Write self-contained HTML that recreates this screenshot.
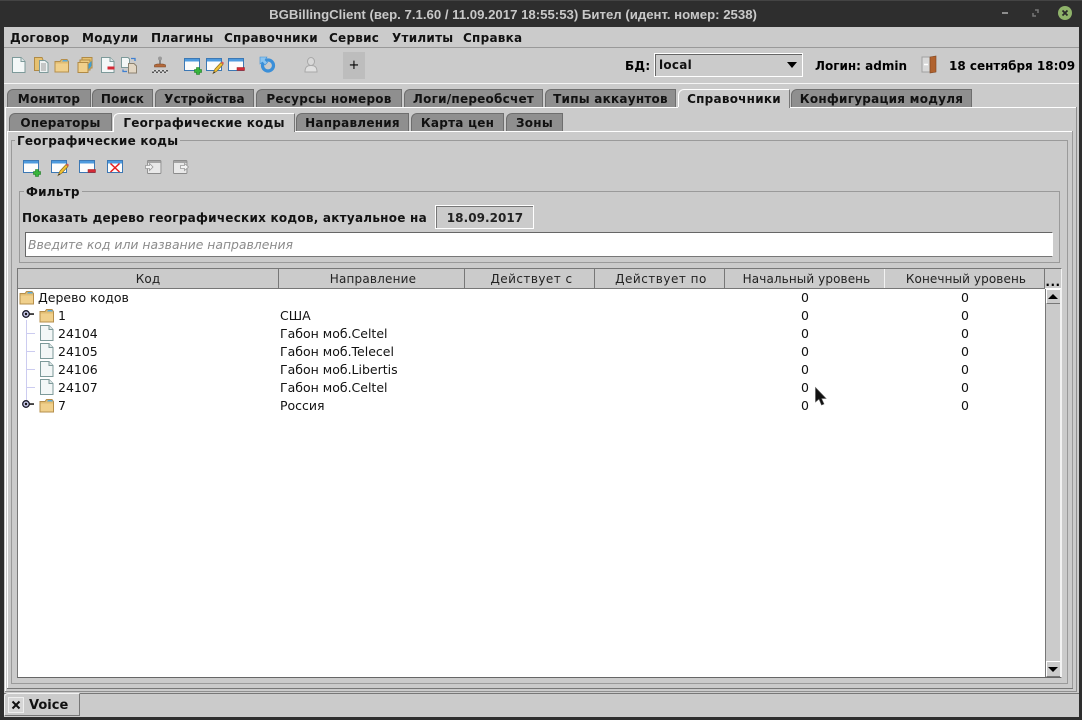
<!DOCTYPE html>
<html><head><meta charset="utf-8">
<style>
html,body{margin:0;padding:0;width:1082px;height:720px;overflow:hidden;background:#2e2e2e}
*{box-sizing:border-box}
body{font-family:"DejaVu Sans","Liberation Sans",sans-serif;color:#000;position:relative}
.a,.t,.b{position:absolute}
.t{white-space:nowrap;line-height:16px;height:16px;font-size:13px}
.b{font-weight:bold;font-size:12px;letter-spacing:.25px}
.m{top:30px;font-size:12px;letter-spacing:.25px;font-weight:bold;line-height:16px;position:absolute;white-space:nowrap;color:#111}
.tab{position:absolute;height:18px;background:#8f8f8f;border-top:1px solid #6e6e6e;border-left:1px solid #6e6e6e;border-right:1px solid #6e6e6e;border-top-left-radius:6px 6px;font-size:12px;letter-spacing:.25px;font-weight:bold;line-height:18px;text-align:center;white-space:nowrap;color:#111}
.sel{background:#cbcbcb;border-top:1px solid #fff;border-left:1px solid #fff;border-right:1px solid #777;height:19px;z-index:3}
.h{position:absolute;top:269px;height:19px;background:#cbcbcb;border-right:1px solid #777;font-size:12px;letter-spacing:.1px;line-height:20px;text-align:center;color:#222;white-space:nowrap}
.r{position:absolute;font-size:12.5px;line-height:18px;height:18px;white-space:nowrap;color:#111}
.c{position:absolute;font-size:12.5px;line-height:18px;height:18px;width:20px;text-align:center;color:#111}
svg{position:absolute;overflow:visible}
</style></head><body>
<svg width="0" height="0" style="position:absolute"><defs>
<g id="doc"><path d="M1.5.5H10L14 4.5V15.500H1.500Z" fill="#f3f7f7" stroke="#7d9a9a"/><path d="M10 .5V4.500H14" fill="#dfe8e8" stroke="#7d9a9a"/></g>
<g id="folder"><path d="M1 3.500H6L7.500 1.500H13L14.500 3.500V14H1Z" fill="#e2bd72" stroke="#b58f4c"/><path d="M9 2H13L14 3.500H8Z" fill="#5aa9d8"/><path d="M1.500 5.500H14V13.500H1.500Z" fill="#f0d08c"/></g>
<g id="win"><rect x=".5" y=".5" width="15" height="12" fill="#fcfcfc" stroke="#3c78b4"/><rect x="1" y="1" width="14" height="2.500" fill="#4d9ade"/></g>
<g id="plus"><path d="M10.500 11.500H12.500V9.500H15.500V11.500H17.500V14.500H15.500V16.500H12.500V14.500H10.500Z" fill="#37b43c" stroke="#1c7a22" stroke-width=".6"/></g>
<g id="minus"><rect x="9" y="9.500" width="7.500" height="3" fill="#d42a36" stroke="#962020" stroke-width=".5"/></g>
<g id="pen"><path d="M7 15.500L9 11L15 4.500L17 6.500L11 13Z" fill="#f1c232" stroke="#8a6a20" stroke-width=".7"/><path d="M15 4.500L17 6.500L18 5L16.500 3.500Z" fill="#d65a5a"/><path d="M7 15.500L8 13.500L9.500 14.500Z" fill="#333"/></g>
<g id="gwin"><rect x=".5" y=".5" width="15" height="13" rx="1" fill="#e9e9e9" stroke="#8b8b8b"/><rect x="1" y="1" width="14" height="2" fill="#a5a5a5"/></g>
<g id="key"><circle cx="4" cy="4" r="3.300" fill="#c6c6e6" stroke="#1a1a2a" stroke-width="1.300"/><circle cx="4" cy="4" r="1.200" fill="#111"/><path d="M7.500 3.300H12V4.800H7.500Z" fill="#111"/></g>
</defs></svg>

<!-- window frame -->
<div class="a" style="left:4px;top:27px;width:1075px;height:690px;background:#cbcbcb"></div>
<div class="a" style="left:0;top:0;width:1082px;height:1px;background:#444"></div>
<div class="t" style="left:0;width:1026px;text-align:center;color:#c9c9c9;font-family:'Liberation Sans',sans-serif;font-weight:bold;font-size:13.2px;line-height:16px;top:7px">BGBillingClient (вер. 7.1.60 / 11.09.2017 18:55:53) Бител (идент. номер: 2538)</div>
<div class="a" style="left:1002px;top:12px;width:6px;height:2px;background:#8d8d8d"></div>
<svg style="left:1032px;top:10px" width="8" height="8"><path d="M3 0H6V3M4 6H1V3" fill="none" stroke="#777" stroke-width="1.500"/></svg>
<svg style="left:1057px;top:6px" width="16" height="15"><circle cx="8" cy="7" r="7" fill="#8fb36a"/><path d="M5.500 4.500L10.500 9.500M10.500 4.500L5.500 9.500" stroke="#2a2a2a" stroke-width="1.800"/></svg>

<!-- menu -->
<div class="m" style="left:10px">Договор</div>
<div class="m" style="left:82px">Модули</div>
<div class="m" style="left:151px">Плагины</div>
<div class="m" style="left:224px">Справочники</div>
<div class="m" style="left:329px">Сервис</div>
<div class="m" style="left:392px">Утилиты</div>
<div class="m" style="left:463px">Справка</div>
<div class="a" style="left:4px;top:47px;width:1075px;height:1px;background:#999"></div>

<!-- toolbar icons -->
<svg style="left:11px;top:57px" width="16" height="16"><use href="#doc"/></svg>
<svg style="left:33px;top:57px" width="16" height="16"><path d="M1.500 .5H9L10 3V13.500H1.500Z" fill="#e6c170" stroke="#b08a45"/><path d="M6.500 3.500H12L15 6V15.500H6.500Z" fill="#eef2f2" stroke="#7d9a9a"/><path d="M8 7H13M8 9H13M8 11H13M8 13H13" stroke="#999"/></svg>
<svg style="left:54px;top:58px" width="16" height="14"><use href="#folder"/></svg>
<svg style="left:77px;top:57px" width="16" height="16"><path d="M5 .5H15V11H5Z" fill="#e6c170" stroke="#b08a45"/><path d="M3 3H13V13H3Z" fill="#ecca80" stroke="#b08a45"/><path d="M1 5.500H11V15.500H1Z" fill="#f0d08c" stroke="#b08a45"/><path d="M11.500 7L14.500 4V9L11.500 12.500Z" fill="#3f9fd6"/></svg>
<svg style="left:100px;top:57px" width="18" height="16"><use href="#doc"/><rect x="7.500" y="9.500" width="7" height="3" fill="#d42a36"/></svg>
<svg style="left:120px;top:57px" width="18" height="17"><path d="M1.500 .5H8L9.500 2V10.500H1.500Z" fill="#f3f7f7" stroke="#7d9a9a"/><path d="M8.500 6.500H14L16.500 9V16H8.500Z" fill="#e2d6c3" stroke="#8c8270"/><path d="M11 1.500H15V4M3 12.500V14.500H7" fill="none" stroke="#3f7fd0" stroke-width="1.300"/></svg>
<svg style="left:151px;top:56px" width="18" height="18"><circle cx="9" cy="2.500" r="2" fill="#9a9a9a"/><rect x="8" y="4" width="2" height="4" fill="#8a8a8a"/><path d="M3.500 11V9L6 8H12L14.500 9V11Z" fill="#b46a3c" stroke="#7a4520" stroke-width=".6"/><path d="M1 14H17V17H1Z" fill="#555"/><path d="M1 14H3V15.500H1ZM5 14H7V15.500H5ZM9 14H11V15.500H9ZM13 14H15V15.500H13ZM3 15.500H5V17H3ZM7 15.500H9V17H7ZM11 15.500H13V17H11ZM15 15.500H17V17H15Z" fill="#ddd"/></svg>
<svg style="left:184px;top:58px" width="18" height="17"><use href="#win"/><use href="#plus"/></svg>
<svg style="left:206px;top:58px" width="18" height="17"><use href="#win"/><use href="#pen"/></svg>
<svg style="left:228px;top:58px" width="18" height="15"><use href="#win"/><use href="#minus"/></svg>
<svg style="left:260px;top:57px" width="16" height="16"><circle cx="8" cy="8.500" r="5.500" fill="none" stroke="#3b8fd8" stroke-width="3.200"/><path d="M0 0H7L5 3L7.500 5.500L5 8L2.500 5L0 7Z" fill="#8dc4ee" stroke="#3b8fd8" stroke-width=".6"/></svg>
<svg style="left:304px;top:57px" width="14" height="16"><ellipse cx="7" cy="4.500" rx="3.500" ry="4" fill="#d8d8d8" stroke="#a8a8a8"/><path d="M1 15C1 10 3 8.500 7 8.500S13 10 13 15Z" fill="#e0e0e0" stroke="#a8a8a8"/></svg>
<div class="a" style="left:343px;top:52px;width:22px;height:27px;background:#bdbdbd"></div>
<div class="t" style="left:343px;top:58px;width:22px;text-align:center;font-size:13px">+</div>

<div class="t b" style="left:625px;top:58px">БД:</div>
<div class="a" style="left:654px;top:53px;width:149px;height:24px;border:1px solid #fff;box-shadow:inset 1px 1px 0 #666;background:#cbcbcb"></div>
<div class="t b" style="left:659px;top:57px;color:#111">local</div>
<svg style="left:787px;top:62px" width="10" height="6"><path d="M0 0H10L5 6Z" fill="#000"/></svg>
<div class="t b" style="left:815px;top:58px;letter-spacing:0">Логин: admin</div>
<svg style="left:921px;top:56px" width="16" height="17"><rect x="1" y="1" width="8" height="15" fill="#d8d8d8" stroke="#a0a0a0"/><path d="M9 1L15 0V16L9 17Z" fill="#b0622e" stroke="#7d431e" stroke-width=".6"/><path d="M3 8.500H7" stroke="#fff" stroke-width="1.500"/></svg>
<div class="t b" style="left:949px;top:58px;letter-spacing:0">18 сентября 18:09</div>
<div class="a" style="left:4px;top:83px;width:1075px;height:1px;background:#f5f5f5"></div>

<!-- main tabs -->
<div class="tab" style="left:7px;top:89px;width:84px">Монитор</div>
<div class="tab" style="left:92px;top:89px;width:61px">Поиск</div>
<div class="tab" style="left:155px;top:89px;width:99px">Устройства</div>
<div class="tab" style="left:256px;top:89px;width:146px">Ресурсы номеров</div>
<div class="tab" style="left:404px;top:89px;width:139px">Логи/переобсчет</div>
<div class="tab" style="left:545px;top:89px;width:131px">Типы аккаунтов</div>
<div class="tab sel" style="left:678px;top:89px;width:112px">Справочники</div>
<div class="tab" style="left:791px;top:89px;width:181px">Конфигурация модуля</div>
<div class="a" style="left:5px;top:107px;width:1071px;height:1px;background:#fff"></div>
<div class="a" style="left:5px;top:107px;width:1px;height:584px;background:#fff"></div>
<div class="a" style="left:678px;top:107px;width:111px;height:1px;background:#cbcbcb;z-index:4"></div>
<div class="a" style="left:1076px;top:107px;width:1px;height:585px;background:#8f8f8f"></div>

<!-- sub tabs -->
<div class="tab" style="left:9px;top:113px;width:103px">Операторы</div>
<div class="tab sel" style="left:113px;top:113px;width:182px">Географические коды</div>
<div class="tab" style="left:296px;top:113px;width:113px">Направления</div>
<div class="tab" style="left:411px;top:113px;width:93px">Карта цен</div>
<div class="tab" style="left:506px;top:113px;width:57px">Зоны</div>
<div class="a" style="left:7px;top:131px;width:1066px;height:1px;background:#fff"></div>
<div class="a" style="left:7px;top:131px;width:1px;height:557px;background:#fff"></div>
<div class="a" style="left:114px;top:131px;width:180px;height:1px;background:#cbcbcb;z-index:4"></div>
<div class="a" style="left:1072px;top:131px;width:1px;height:558px;background:#9a9a9a"></div>
<div class="a" style="left:7px;top:688px;width:1066px;height:1px;background:#777"></div>
<div class="a" style="left:5px;top:691px;width:1072px;height:1px;background:#8f8f8f"></div>

<!-- group -->
<div class="a" style="left:11px;top:140px;width:1057px;height:544px;border:1px solid #9a9a9a"></div>
<div class="t b" style="left:15px;top:133px;padding:0 2px;background:#cbcbcb;color:#111">Географические коды</div>
<svg style="left:23px;top:160px" width="18" height="17"><use href="#win"/><use href="#plus"/></svg>
<svg style="left:51px;top:160px" width="18" height="17"><use href="#win"/><use href="#pen"/></svg>
<svg style="left:79px;top:160px" width="18" height="15"><use href="#win"/><use href="#minus"/></svg>
<svg style="left:107px;top:160px" width="16" height="14"><use href="#win"/><path d="M3.500 3.500L12.500 12M12.500 3.500L3.500 12" stroke="#e81c1c" stroke-width="1.500"/></svg>
<svg style="left:145px;top:160px" width="16" height="14"><use href="#gwin" transform="translate(2,0) scale(.9,1)"/><path d="M.5 5.500H4.500V3.500L8 7L4.500 10.500V8.500H.5Z" fill="#f4f4f4" stroke="#999" stroke-width=".8"/></svg>
<svg style="left:173px;top:160px" width="16" height="14"><use href="#gwin" transform="scale(.9,1)"/><path d="M7.500 5.500H11.500V3.500L15.500 7L11.500 10.500V8.500H7.500Z" fill="#f4f4f4" stroke="#999" stroke-width=".8"/></svg>

<!-- filter -->
<div class="a" style="left:19px;top:191px;width:1041px;height:72px;border:1px solid #9a9a9a"></div>
<div class="t b" style="left:24px;top:184px;padding:0 2px;background:#cbcbcb;color:#111">Фильтр</div>
<div class="t b" style="left:22px;top:210px;color:#111">Показать дерево географических кодов, актуальное на</div>
<div class="a" style="left:435px;top:205px;width:99px;height:24px;background:#cbcbcb;border:1px solid #fff;box-shadow:inset 1px 1px 0 #777"></div>
<div class="t b" style="left:435px;top:210px;width:100px;text-align:center;color:#222;letter-spacing:.05px">18.09.2017</div>
<div class="a" style="left:25px;top:232px;width:1028px;height:25px;background:#fff;border:1px solid #666;border-right-color:#fff;border-bottom-color:#777"></div>
<div class="t" style="left:28px;top:237px;font-style:italic;color:#8b8b8b;font-size:12.4px">Введите код или название направления</div>

<!-- table -->
<div class="a" style="left:17px;top:268px;width:1045px;height:410px;background:#fff;border:1px solid #777;border-right-color:#f2f2f2;border-bottom-color:#666"></div>
<div class="a" style="left:18px;top:269px;width:1043px;height:19px;background:#cbcbcb"></div>
<div class="a" style="left:18px;top:288px;width:1027px;height:1px;background:#777"></div>
<div class="h" style="left:18px;width:261px">Код</div>
<div class="h" style="left:279px;width:188px;border-right:0;letter-spacing:.2px">Направление</div>
<div class="a" style="left:464px;top:269px;width:1px;height:19px;background:#777"></div>
<div class="h" style="left:465px;width:133px;border-right:0;letter-spacing:.45px">Действует с</div>
<div class="a" style="left:594px;top:269px;width:1px;height:19px;background:#777"></div>
<div class="h" style="left:595px;width:132px;border-right:0;letter-spacing:.5px">Действует по</div>
<div class="a" style="left:724px;top:269px;width:1px;height:19px;background:#777"></div>
<div class="h" style="left:725px;width:163px;border-right:0">Начальный уровень</div>
<div class="a" style="left:884px;top:269px;width:1px;height:19px;background:#f2f2f2"></div>
<div class="h" style="left:885px;width:162px;border-right:0">Конечный уровень</div>
<div class="a" style="left:1044px;top:269px;width:1px;height:19px;background:#777"></div>
<div class="t b" style="left:1045px;top:275px;width:16px;text-align:center;line-height:14px;height:14px;letter-spacing:.5px">...</div>

<!-- tree lines -->
<div class="a" style="left:26px;top:320px;width:1px;height:82px;background:#ccccf0"></div>
<div class="a" style="left:26px;top:333px;width:9px;height:1px;background:#ccccf0"></div>
<div class="a" style="left:26px;top:351px;width:9px;height:1px;background:#ccccf0"></div>
<div class="a" style="left:26px;top:369px;width:9px;height:1px;background:#ccccf0"></div>
<div class="a" style="left:26px;top:387px;width:9px;height:1px;background:#ccccf0"></div>

<!-- rows -->
<svg style="left:19px;top:290px" width="15" height="14"><use href="#folder"/></svg>
<div class="r" style="left:38px;top:289px">Дерево кодов</div>
<svg style="left:22px;top:310px" width="13" height="8"><use href="#key"/></svg>
<svg style="left:39px;top:308px" width="15" height="14"><use href="#folder"/></svg>
<div class="r" style="left:58px;top:307px">1</div><div class="r" style="left:280px;top:307px">США</div>
<svg style="left:39px;top:325px" width="16" height="16"><use href="#doc"/></svg>
<div class="r" style="left:58px;top:325px">24104</div><div class="r" style="left:280px;top:325px">Габон моб.Celtel</div>
<svg style="left:39px;top:343px" width="16" height="16"><use href="#doc"/></svg>
<div class="r" style="left:58px;top:343px">24105</div><div class="r" style="left:280px;top:343px">Габон моб.Telecel</div>
<svg style="left:39px;top:361px" width="16" height="16"><use href="#doc"/></svg>
<div class="r" style="left:58px;top:361px">24106</div><div class="r" style="left:280px;top:361px">Габон моб.Libertis</div>
<svg style="left:39px;top:379px" width="16" height="16"><use href="#doc"/></svg>
<div class="r" style="left:58px;top:379px">24107</div><div class="r" style="left:280px;top:379px">Габон моб.Celtel</div>
<svg style="left:22px;top:400px" width="13" height="8"><use href="#key"/></svg>
<svg style="left:39px;top:398px" width="15" height="14"><use href="#folder"/></svg>
<div class="r" style="left:58px;top:397px">7</div><div class="r" style="left:280px;top:397px">Россия</div>

<div class="c" style="left:795px;top:289px">0</div><div class="c" style="left:955px;top:289px">0</div>
<div class="c" style="left:795px;top:307px">0</div><div class="c" style="left:955px;top:307px">0</div>
<div class="c" style="left:795px;top:325px">0</div><div class="c" style="left:955px;top:325px">0</div>
<div class="c" style="left:795px;top:343px">0</div><div class="c" style="left:955px;top:343px">0</div>
<div class="c" style="left:795px;top:361px">0</div><div class="c" style="left:955px;top:361px">0</div>
<div class="c" style="left:795px;top:379px">0</div><div class="c" style="left:955px;top:379px">0</div>
<div class="c" style="left:795px;top:397px">0</div><div class="c" style="left:955px;top:397px">0</div>

<!-- cursor -->
<svg style="left:815px;top:387px;z-index:6" width="12" height="19"><path d="M.5.5V15L4 12L6.500 18L9 17L6.500 11.500H11Z" fill="#111" stroke="#555" stroke-width=".6"/></svg>

<!-- scrollbar -->
<div class="a" style="left:1045px;top:289px;width:16px;height:388px;background:#cbcbcb;border-left:1px solid #777;border-right:1px solid #f2f2f2"></div>
<div class="a" style="left:1046px;top:289px;width:14px;height:15px;background:#cbcbcb;border-top:1px solid #fff;border-left:1px solid #fff;border-bottom:1px solid #777"></div>
<svg style="left:1048px;top:294px" width="10" height="5"><path d="M0 5H10L5 0Z" fill="#000"/></svg>
<div class="a" style="left:1046px;top:661px;width:14px;height:16px;background:#cbcbcb;border-top:1px solid #fff;border-left:1px solid #fff;border-bottom:1px solid #777"></div>
<svg style="left:1048px;top:667px" width="10" height="5"><path d="M0 0H10L5 5Z" fill="#000"/></svg>

<!-- bottom -->
<div class="a" style="left:4px;top:693px;width:1075px;height:1px;background:#777"></div>
<div class="a" style="left:4px;top:693px;width:76px;height:23px;background:#cbcbcb;border-top:1px solid #f2f2f2;border-left:1px solid #f2f2f2;border-right:1px solid #777;border-bottom:1px solid #777;border-top-left-radius:4px"></div>
<div class="a" style="left:8px;top:697px;width:16px;height:16px;background:#d6d6d6;border:1px solid #eee"></div>
<svg style="left:12px;top:701px" width="8" height="8"><path d="M0.500 0.500L7.500 7.500M7.500 0.500L0.500 7.500" stroke="#111" stroke-width="2"/></svg>
<div class="t b" style="left:29px;top:698px;color:#111;font-size:13px;letter-spacing:0">Voice</div>
</body></html>
